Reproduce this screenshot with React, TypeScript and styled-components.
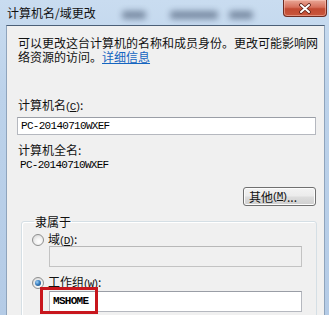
import React from "react";
import styled, { createGlobalStyle } from "styled-components";

const GlobalStyle = createGlobalStyle`
  html, body { margin: 0; padding: 0; }
  body {
    width: 329px;
    height: 315px;
    overflow: hidden;
    font-family: "Noto Sans CJK SC", "Noto Sans", sans-serif;
  }
`;

const Window = styled.div`
  width: 329px;
  height: 315px;
  display: flex;
  flex-direction: column;
  background: linear-gradient(180deg, #c9dcf0 0%, #bcd2ea 30%, #b4cbe6 100%);
  overflow: hidden;
`;

const TitleBar = styled.div`
  position: relative;
  height: 25px;
  flex: none;
  display: flex;
  align-items: flex-start;
`;

const Title = styled.div`
  padding: 6px 0 0 7px;
  font-size: 12px;
  line-height: 13px;
  color: #111;
  position: relative;
  z-index: 1;
`;

const Blob = styled.div<{ $left: number; $width: number }>`
  position: absolute;
  top: 11px;
  left: ${(p) => p.$left}px;
  width: ${(p) => p.$width}px;
  height: 8px;
  background: #6f8199;
  filter: blur(3px);
  opacity: 0.9;
  border-radius: 3px;
`;

const CloseButton = styled.div`
  margin-left: auto;
  margin-right: 2px;
  width: 44px;
  height: 17px;
  box-sizing: border-box;
  border: 1px solid #6e2c22;
  border-top: none;
  border-radius: 0 0 4px 4px;
  background: linear-gradient(180deg, #e9a796 0%, #d7705c 45%, #c24a32 55%, #c9573d 100%);
  box-shadow: inset 0 0 0 1px rgba(255, 210, 200, 0.45);
  display: flex;
  align-items: center;
  justify-content: center;
  position: relative;
  z-index: 1;
`;

const Client = styled.div`
  flex: 1;
  margin: 0 4px 0 6px;
  border: 1px solid #8fa4bc;
  border-top-color: #4b5f77;
  border-bottom: none;
  background: #f0f0f0;
  padding: 10px 8px 0 10px;
  display: flex;
  flex-direction: column;
  font-size: 12px;
  line-height: 13px;
  color: #111;
`;

const Description = styled.div`
  padding-left: 1px;
  white-space: nowrap;
  line-height: 14px;
`;

const Link = styled.span`
  color: #1565c0;
  text-decoration: underline;
`;

const Label = styled.div<{ $top: number }>`
  margin-top: ${(p) => p.$top}px;
  padding-left: 1px;
  white-space: nowrap;
`;

const Key = styled.span`
  text-decoration: underline;
  font-family: "Liberation Mono", monospace;
  font-size: 11px;
`;

const Paren = styled.span`
  font-family: "Liberation Sans", sans-serif;
  font-size: 11px;
`;

const TextBox = styled.div<{ $top?: number; $disabled?: boolean; $height?: number }>`
  margin-top: ${(p) => p.$top ?? 0}px;
  height: ${(p) => p.$height ?? 18}px;
  box-sizing: border-box;
  border: 1px solid ${(p) => (p.$disabled ? "#c3c3c3" : "#b5b8bf")};
  border-top-color: ${(p) => (p.$disabled ? "#b8b8b8" : "#9a9ea6")};
  background: ${(p) => (p.$disabled ? "#f0f0f0" : "#fff")};
  display: flex;
  align-items: center;
  padding-left: 3px;
  position: relative;
`;

const Mono = styled.span<{ $bold?: boolean }>`
  font-family: "Liberation Mono", "DejaVu Sans Mono", monospace;
  font-size: 11px;
  letter-spacing: -0.7px;
  font-weight: ${(p) => (p.$bold ? 700 : 400)};
  color: #000;
`;

const Value = styled.div`
  padding-left: 3px;
  line-height: 13px;
`;

const ButtonRow = styled.div`
  margin-top: 15px;
  display: flex;
  justify-content: flex-end;
`;

const PushButton = styled.div`
  width: 73px;
  height: 19px;
  box-sizing: border-box;
  border: 1px solid #707070;
  border-radius: 3px;
  background: linear-gradient(180deg, #f3f3f3 0%, #ebebeb 48%, #dddddd 52%, #cfcfcf 100%);
  box-shadow: inset 0 0 0 1px #fcfcfc;
  display: flex;
  align-items: center;
  padding-left: 5px;
  font-size: 12px;
  line-height: 13px;
`;

const Group = styled.fieldset`
  margin: 9px -1px 0 4px;
  padding: 5px 14px 20px 10px;
  border: 1px solid #d5dfe5;
  border-radius: 3px;
  box-shadow: inset 1px 1px 0 #fff;
  display: flex;
  flex-direction: column;
  min-width: 0;
`;

const Legend = styled.legend`
  margin-left: 2px;
  padding: 0 1px;
  font-size: 12px;
  line-height: 13px;
`;

const RadioRow = styled.div<{ $top?: number }>`
  margin-top: ${(p) => p.$top ?? 0}px;
  display: flex;
  align-items: center;
  gap: 4px;
  height: 13px;
  white-space: nowrap;
`;

const RadioDot = styled.span<{ $checked?: boolean }>`
  width: 12px;
  height: 12px;
  box-sizing: border-box;
  border-radius: 50%;
  border: 1px solid #8e8f8f;
  background: radial-gradient(circle at 60% 65%, #ffffff 0%, #f2f2f2 40%, #cfcfcf 100%);
  display: flex;
  align-items: center;
  justify-content: center;
  flex: none;
  &::after {
    content: "";
    display: ${(p) => (p.$checked ? "block" : "none")};
    width: 6px;
    height: 6px;
    border-radius: 50%;
    background: radial-gradient(circle at 35% 35%, #9fd0f5 0%, #3a7fc0 45%, #173e6b 100%);
  }
`;

const FieldBox = styled(TextBox)`
  margin-left: 17px;
`;

const Highlight = styled.div`
  position: absolute;
  left: -10px;
  top: -5px;
  width: 58px;
  height: 27px;
  box-sizing: border-box;
  border: 3px solid #c8161d;
  pointer-events: none;
`;

export default function App() {
  return (
    <>
      <GlobalStyle />
      <Window>
        <TitleBar>
          <Title>计算机名/域更改</Title>
          <Blob $left={122} $width={24} />
          <Blob $left={170} $width={48} />
          <Blob $left={229} $width={24} />
          <CloseButton>
            <svg width="14" height="11" viewBox="0 0 14 11">
              <path d="M3 2 L11 9 M11 2 L3 9" stroke="#5a1f16" strokeWidth="3.6" strokeLinecap="round" />
              <path d="M3 2 L11 9 M11 2 L3 9" stroke="#ffffff" strokeWidth="2" strokeLinecap="round" />
            </svg>
          </CloseButton>
        </TitleBar>
        <Client>
          <Description>
            可以更改这台计算机的名称和成员身份。更改可能影响网
            <br />
            络资源的访问。<Link>详细信息</Link>
          </Description>
          <Label $top={34}>
            计算机名<Paren>(</Paren>
            <Key>C</Key>
            <Paren>)</Paren>:
          </Label>
          <TextBox $top={3}>
            <Mono>PC-20140710WXEF</Mono>
          </TextBox>
          <Label $top={8}>计算机全名:</Label>
          <Value>
            <Mono>PC-20140710WXEF</Mono>
          </Value>
          <ButtonRow>
            <PushButton>
              其他<Paren>(</Paren>
              <Key>M</Key>
              <Paren>)</Paren>...
            </PushButton>
          </ButtonRow>
          <Group>
            <Legend>隶属于</Legend>
            <RadioRow>
              <RadioDot />
              <span>
                域<Paren>(</Paren>
                <Key>D</Key>
                <Paren>)</Paren>:
              </span>
            </RadioRow>
            <FieldBox $disabled $height={21} />
            <RadioRow $top={9}>
              <RadioDot $checked />
              <span>
                工作组<Paren>(</Paren>
                <Key>W</Key>
                <Paren>)</Paren>:
              </span>
            </RadioRow>
            <FieldBox $top={2} $height={21}>
              <Mono $bold>MSHOME</Mono>
              <Highlight />
            </FieldBox>
          </Group>
        </Client>
      </Window>
    </>
  );
}
